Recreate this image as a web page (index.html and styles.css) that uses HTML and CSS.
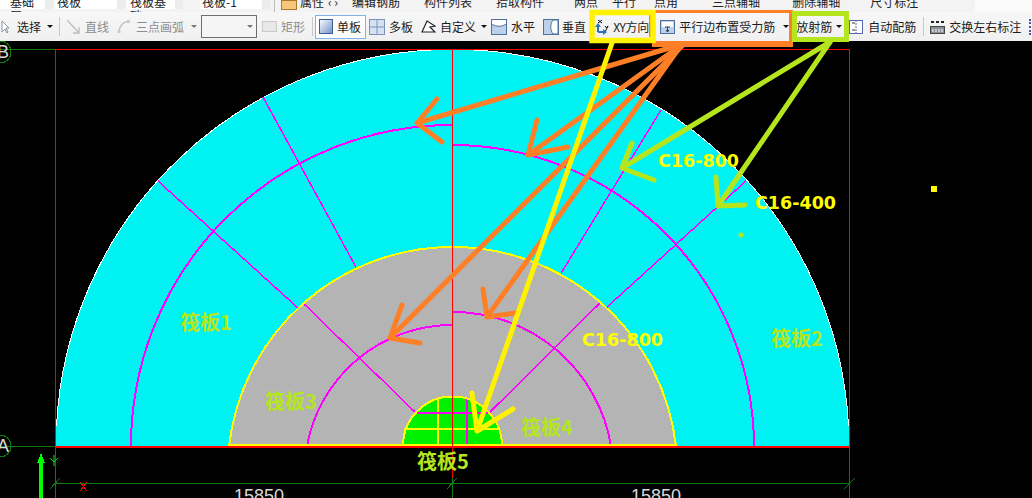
FILE: index.html
```html
<!DOCTYPE html>
<html lang="zh">
<head>
<meta charset="utf-8">
<title>筏板钢筋布置</title>
<link rel="stylesheet" href="styles.css">
</head>
<body>
<div class="page">
  <div class="topstrip">
    <span class="tab tab-a">基础层</span>
    <span class="tab tab-b">筏板</span>
    <span class="tab tab-c">筏板基础</span>
    <span class="tab tab-d">筏板-1</span>
    <span class="top-sep"></span>
    <span class="top-icon"></span>
    <span class="top-text t-shuxing">属性</span>
    <span class="top-text t-nav">‹ ›</span>
    <span class="top-text t-bianji">编辑钢筋</span>
    <span class="top-text t-goujian">构件列表</span>
    <span class="top-text t-shiqu">拾取构件</span>
    <span class="top-text t-liangdian">两点</span>
    <span class="top-text t-pingxing">平行</span>
    <span class="top-text t-pingxing2">点角</span>
    <span class="top-text t-sandian">三点辅轴</span>
    <span class="top-text t-shanchu">删除辅轴</span>
    <span class="top-text t-chicun">尺寸标注</span>
  </div>

  <div class="toolbar">
    <svg class="ico m1 w8" viewBox="0 0 8 16"><path d="M1 2v11l3-3 2 4 1-1-2-4h3z" fill="#fff" stroke="#8a94a8"/></svg>
    <span class="label m8">选择</span>
    <span class="tri m6"></span>
    <span class="sep m6"></span>

    <svg class="ico m7 w13" viewBox="0 0 13 16"><path d="M0 1l12 13M12 8v6H6" fill="none" stroke="#bdbdbd" stroke-width="1.3"/></svg>
    <span class="label dim m5">直线</span>
    <svg class="ico m8 w13" viewBox="0 0 13 16"><path d="M2 14C2 7 6 3 12 2" fill="none" stroke="#c4c4c4" stroke-width="1.5"/><rect x="0.500" y="11" width="3" height="3" fill="#ccc"/><rect x="10" y="1" width="3" height="3" fill="#ccc"/></svg>
    <span class="label dim m6">三点画弧</span>
    <span class="tri dim-tri m7"></span>
    <span class="combo m4"><span class="tri dim-tri"></span></span>

    <svg class="ico m5 w15" viewBox="0 0 15 16"><rect x="0.500" y="2.500" width="14" height="10" fill="#e8e8e8" stroke="#c8c8c8"/></svg>
    <span class="label dim m4">矩形</span>
    <span class="sep m7"></span>

    <span class="active-btn m2">
      <svg class="ico w14" viewBox="0 0 14 16"><rect x="0.500" y="0.500" width="13" height="14" fill="url(#paneFill)" stroke="#3e5c96"/></svg>
      <span class="label">单板</span>
    </span>

    <svg class="ico m3 w16" viewBox="0 0 16 16"><rect x="0.500" y="0.500" width="15" height="15" fill="#d4e2f4" stroke="#7c93b8"/><path d="M8 0v16M0 8h16" stroke="#7c93b8"/></svg>
    <span class="label m4">多板</span>

    <svg class="ico m8 w15" viewBox="0 0 15 16"><path d="M1 13L6 2l8 5-5 1 5 5z" fill="#fff" stroke="#222" stroke-width="1.200"/></svg>
    <span class="label m4">自定义</span>
    <span class="tri m5"></span>

    <svg class="ico m4 w16" viewBox="0 0 16 16"><rect x="0.500" y="0.500" width="15" height="15" fill="#bcd0ea" stroke="#50709c"/><path d="M1 5c4 3 10 3 14 0" fill="#fff" stroke="#50709c"/><rect x="1" y="1" width="14" height="4" fill="#fff"/></svg>
    <span class="label m4">水平</span>

    <svg class="ico m8 w16" viewBox="0 0 16 16"><rect x="0.500" y="0.500" width="15" height="15" fill="#bcd0ea" stroke="#50709c"/><path d="M10 1c-3 4-3 10 0 14h5V1z" fill="#fff" stroke="#50709c"/></svg>
    <span class="label m3">垂直</span>

    <svg class="ico m7 w16" viewBox="0 0 16 16"><path d="M5 13V7M5 13h6" stroke="#2e6fb8" stroke-width="2" fill="none"/><path d="M2 8l3-4 3 4zM10 10l4 3-4 3z" fill="#2e6fb8"/><path d="M5 1l4 3M9 1L5 4" stroke="#111"/><path d="M12 7l1.500 2 1.500-2M15 7l-2.500 5" stroke="#111" fill="none"/></svg>
    <span class="label m4 xy">XY方向</span>

    <svg class="ico m11 w15" viewBox="0 0 15 16"><rect x="0.500" y="1.500" width="14" height="13" fill="#bcd0ea" stroke="#50709c"/><rect x="2" y="3" width="11" height="5" fill="#fff"/><path d="M5 8h5M7.500 8v5M6 11l1.500 2 1.500-2" stroke="#27425f" fill="none"/></svg>
    <span class="label m4">平行边布置受力筋</span>
    <span class="tri m8"></span>

    <span class="label m7">放射筋</span>
    <span class="tri m4"></span>

    <svg class="ico m7 w14" viewBox="0 0 14 16"><rect x="0.500" y="1.500" width="13" height="13" fill="#fff" stroke="#5a66b0"/><path d="M7 1v14" stroke="#5a66b0" stroke-dasharray="2 1"/><path d="M3 4h3M3 11h3" stroke="#333"/></svg>
    <span class="label m5">自动配筋</span>
    <span class="sep m7"></span>

    <svg class="ico m6 w15" viewBox="0 0 15 16"><rect x="0.500" y="7.500" width="14" height="7" fill="#8a8f98" stroke="#444"/><path d="M1 3h3M6 3h3M11 3h3" stroke="#222" stroke-width="2"/><path d="M3 10v3M6 10v3M9 10v3M12 10v3" stroke="#fff"/></svg>
    <span class="label m4">交换左右标注</span>
    <span class="sliver m8"></span>
  </div>

  <svg class="drawing" viewBox="0 41 1032 457">
    <defs>
      <linearGradient id="paneFill" x1="0" y1="0" x2="1" y2="1">
        <stop offset="0" stop-color="#ffffff"/>
        <stop offset="1" stop-color="#6f8fc9"/>
      </linearGradient>
    </defs>

    <path class="fill-cyan" d="M56 446A396.500 396.500 0 0 1 849 446Z"/>
    <path class="edge-white" d="M56.500 426A396.500 396.500 0 0 1 848.500 426"/>
    <path class="fill-gray" d="M229 446A225 225 0 0 1 676 446Z"/>
    <path class="fill-green" d="M403 446A49.500 49.500 0 0 1 502 446Z"/>

    <path class="yellow" d="M404 429H500M438 398V445"/>

    <g class="magenta">
      <path d="M263 97L357 269"/>
      <path d="M158 181L298 308"/>
      <path d="M661 110L560 275"/>
      <path d="M746 181L606 308"/>
      <path d="M303 303L415 412"/>
      <path d="M600 303L490 412"/>
    </g>
    <g class="magenta-arc">
      <path d="M131 446A321 321 0 0 1 452 125"/>
      <path d="M452 145A302 302 0 0 1 754 446"/>
      <path d="M307 446A147.400 147.400 0 0 1 452 325"/>
      <path d="M452 312A160 160 0 0 1 611 446"/>
    </g>
    <path class="magenta-bold" d="M415 412.500H490M467 398V446"/>

    <path class="yellow" d="M229 444.500H676"/>
    <path class="yellow" d="M229 446A225 225 0 0 1 676 446M403 446A49.500 49.500 0 0 1 502 446"/>

    <g class="dark-green">
      <path d="M0 49.500H56M0 446.500H56M55.500 446V498M849.500 446V498M452.500 478V498M55 483.500H849"/>
      <path d="M50 489L60 478M447 489L457 478M844 489L855 478"/>
      <circle cx="0" cy="52" r="11"/>
      <circle cx="0" cy="446" r="11"/>
    </g>

    <g class="red-thin">
      <path d="M55.500 49.500H849.500V446M55.500 49.500V446M452.500 49V478"/>
      <path d="M80 482L87 491M87 482L80 491"/>
    </g>
    <path class="red-thick" d="M56 446.500H849"/>

    <path class="green-bright" d="M54 455L54 466M50 458L54 462L58 458"/>
    <path class="fill-arrow" d="M41 453L45 463H43V498H39V463H37Z"/>

    <rect class="dot-yellow" x="931" y="186" width="6" height="6"/>
    <circle class="dot-lime" cx="741" cy="235" r="2.500"/>

    <text class="axis" x="-3" y="58">B</text>
    <text class="axis" x="-3" y="452">A</text>
    <text class="dim-text" x="234" y="502">15850</text>
    <text class="dim-text" x="631" y="502">15850</text>

    <text class="zone" x="180" y="330">筏板1</text>
    <text class="zone" x="771" y="346">筏板2</text>
    <text class="zone" x="265" y="409">筏板3</text>
    <text class="zone" x="521" y="435">筏板4</text>
    <text class="zone" x="417" y="469">筏板5</text>
  </svg>

  <svg class="overlay" viewBox="0 0 1032 498">
    <text class="rebar" x="658" y="167">C16-800</text>
    <text class="rebar" x="755" y="209">C16-400</text>
    <text class="rebar" x="582" y="346">C16-800</text>

    <g class="ann ann-orange">
      <path d="M683 44L417 123M437 99L417 123L442 142"/>
      <path d="M680 46L528 155M537 120L528 155L568 147"/>
      <path d="M684 44L390 338M402 305L390 338L420 343"/>
      <path d="M682 44L487 317M483 289L487 317L515 313"/>
    </g>
    <g class="box-orange">
      <rect x="652" y="10" width="141" height="3"/>
      <rect x="652" y="41" width="141" height="6"/>
      <rect x="789" y="10" width="4" height="37"/>
      <rect x="649" y="15" width="2" height="22"/>
    </g>
    <path class="ann ann-yellow" d="M612 43L477 431M472 393L477 431L513 409"/>
    <rect class="box box-yellow" x="592" y="12.500" width="61" height="28"/>
    <g class="ann ann-lime">
      <path d="M830 42L622 168M632 143L622 168L654 180"/>
      <path d="M830 42L718 206M716 177L718 206L745 205"/>
    </g>
    <rect class="box box-lime" x="794.500" y="13.500" width="52" height="26"/>
  </svg>
</div>
</body>
</html>
```
FILE: styles.css
```css
* { box-sizing: border-box; }

html, body {
  margin: 0;
  padding: 0;
  background: #000;
}

.page {
  position: relative;
  width: 1032px;
  height: 498px;
  overflow: hidden;
  font-family: "Noto Sans CJK SC", "Liberation Sans", sans-serif;
}

/* clipped row above the toolbar */
.topstrip {
  display: flex;
  align-items: flex-end;
  height: 12px;
  overflow: hidden;
  background: linear-gradient(90deg, #f3f3f3 0 975px, #fbfbfb 975px);
  font-size: 12px;
  line-height: 14px;
  color: #222;
}

.tab {
  flex: none;
  height: 20px;
  margin-bottom: 3px;
  padding-top: 6px;
  background: #fff;
  margin-right: 2px;
  border-right: 8px solid #ececec;
}

.tab-a { width: 53px; padding-left: 10px; }
.tab-b { width: 70px; padding-left: 2px; }
.tab-c { width: 56px; padding-left: 3px; }
.tab-d { width: 70px; margin-left: 15px; padding-left: 2px; }

.top-sep {
  flex: none;
  width: 1px;
  height: 12px;
  margin-left: 2px;
  background: #bbb;
}

.top-icon {
  flex: none;
  width: 16px;
  height: 10px;
  margin: 0 0 2px 6px;
  background: #f6c77a;
  border: 1px solid #a87a30;
}

.top-text {
  flex: none;
  margin-bottom: 3px;
  white-space: nowrap;
}

.t-shuxing { margin-left: 3px; }
.t-nav { margin-left: 4px; width: 24px; }
.t-bianji { margin-left: 0; }
.t-goujian { margin-left: 24px; }
.t-shiqu { margin-left: 24px; }
.t-liangdian { margin-left: 30px; }
.t-pingxing { margin-left: 14px; }
.t-pingxing2 { margin-left: 18px; }
.t-sandian { margin-left: 34px; }
.t-shanchu { margin-left: 32px; }
.t-chicun { margin-left: 30px; }

/* toolbar */
.toolbar {
  display: flex;
  align-items: center;
  height: 29px;
  background: linear-gradient(#f7f7f7, #f0f0f0);
  font-size: 12px;
  line-height: 16px;
  color: #1c1c1c;
  white-space: nowrap;
}

.toolbar > * { flex: none; }

.label { display: block; }
.dim { color: #8c8c8c; }
.xy { width: 36px; letter-spacing: -0.4px; }

.ico { display: block; height: 16px; }
.w8 { width: 8px; }
.w13 { width: 13px; }
.w14 { width: 14px; }
.w15 { width: 15px; }
.w16 { width: 16px; }

.m1 { margin-left: 1px; }
.m2 { margin-left: 2px; }
.m3 { margin-left: 3px; }
.m4 { margin-left: 4px; }
.m5 { margin-left: 5px; }
.m6 { margin-left: 6px; }
.m7 { margin-left: 7px; }
.m8 { margin-left: 8px; }
.m11 { margin-left: 11px; }

.tri {
  display: block;
  width: 0;
  height: 0;
  border-left: 3px solid transparent;
  border-right: 3px solid transparent;
  border-top: 3px solid #111;
}

.dim-tri { border-top-color: #777; }

.sep {
  display: block;
  width: 1px;
  height: 19px;
  background: #c9c9c9;
}

.combo {
  display: flex;
  align-items: center;
  justify-content: flex-end;
  width: 56px;
  height: 23px;
  padding-right: 3px;
  background: #f5f5f5;
  border: 1px solid #6e6e6e;
}

.active-btn {
  display: flex;
  align-items: center;
  gap: 4px;
  width: 51px;
  height: 24px;
  padding-left: 3px;
  background: #fdfdfd;
  border: 1px solid #7fb4e8;
}

.sliver {
  display: block;
  width: 2px;
  height: 16px;
  border-left: 2px dotted #445a9a;
}

/* drawing */
.drawing {
  display: block;
  width: 1032px;
  height: 457px;
  background: #000;
}

.overlay {
  position: absolute;
  left: 0;
  top: 0;
  width: 1032px;
  height: 498px;
}

.fill-cyan { fill: #00f3f3; shape-rendering: crispEdges; }
.fill-gray { fill: #b4b4b4; shape-rendering: crispEdges; }
.fill-green { fill: #00f000; shape-rendering: crispEdges; }

.edge-white { fill: none; stroke: #fff; stroke-width: 1; shape-rendering: crispEdges; }

.yellow { fill: none; stroke: #ffff00; stroke-width: 2; shape-rendering: crispEdges; }

.magenta path { fill: none; stroke: #ff00ff; stroke-width: 1.500; shape-rendering: crispEdges; }
.magenta-arc path { fill: none; stroke: #ff00ff; stroke-width: 2; shape-rendering: crispEdges; }
.magenta-bold { fill: none; stroke: #ff00ff; stroke-width: 2; shape-rendering: crispEdges; }

.dark-green path,
.dark-green circle { fill: none; stroke: #0f7a0f; stroke-width: 1; shape-rendering: crispEdges; }

.red-thin path { fill: none; stroke: #ff0000; stroke-width: 1; shape-rendering: crispEdges; }
.red-thick { fill: none; stroke: #ff0000; stroke-width: 2; shape-rendering: crispEdges; }

.green-bright { fill: none; stroke: #19d419; stroke-width: 1; }
.fill-arrow { fill: #00ff00; shape-rendering: crispEdges; }

.dot-yellow { fill: #ffff00; }
.dot-lime { fill: #b5e61d; }

.axis {
  font-family: "Liberation Sans", sans-serif;
  font-size: 18px;
  fill: #d8d8d8;
}

.dim-text {
  font-family: "Liberation Sans", sans-serif;
  font-size: 18px;
  fill: #d8d8d8;
}

.zone {
  font-family: "Noto Sans CJK SC", "Liberation Sans", sans-serif;
  font-size: 20px;
  font-weight: 700;
  fill: #b5e61d;
}

.rebar {
  font-family: "DejaVu Sans", sans-serif;
  font-size: 17.500px;
  font-weight: 700;
  fill: #ffff00;
}

.ann path,
.ann.ann-yellow {
  fill: none;
  stroke-width: 5;
  stroke-linecap: round;
  stroke-linejoin: round;
}

.ann-orange path { stroke: #ff7f27; }
.ann-yellow { stroke: #fff200; }
.ann-lime path { stroke: #b5e61d; }

.box-orange rect { fill: #ff7f27; }

.box { fill: none; stroke-width: 5.500; }
.box-yellow { stroke: #fff200; }
.box-lime { stroke: #b5e61d; stroke-width: 5; }
```
